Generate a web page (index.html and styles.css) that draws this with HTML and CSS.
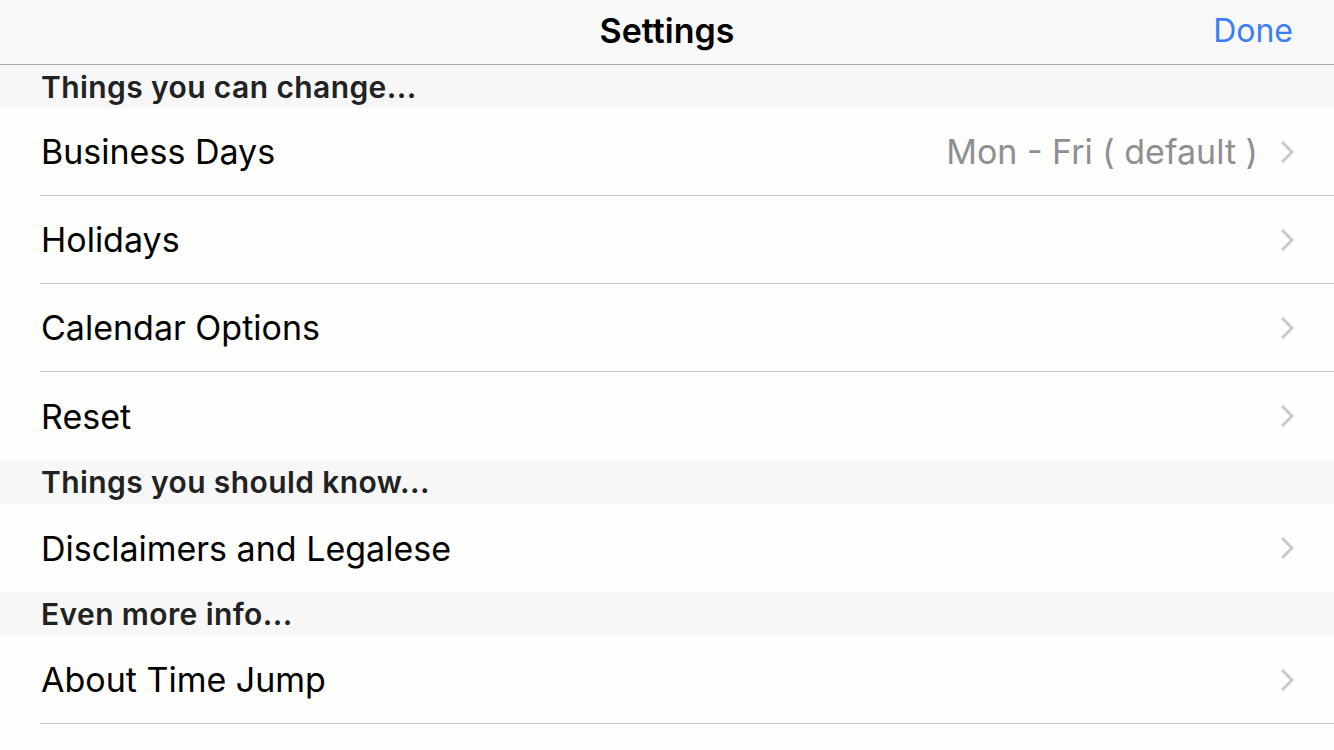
FILE: index.html
```html
<!DOCTYPE html>
<html lang="en">
<head>
  <meta charset="UTF-8">
  <meta name="viewport" content="width=device-width, initial-scale=1.0">
  <title>Settings</title>
  <link rel="stylesheet" href="styles.css">
</head>
<body>
  <div class="navbar">
    <div class="nav-title">Settings</div>
    <div class="nav-done">Done</div>
  </div>

  <div class="section-head first">Things you can change...</div>
  <div class="row sep">
    <span class="label">Business Days</span>
    <span class="detail">Mon - Fri ( default )</span>
    <svg class="chev" width="14" height="24" viewBox="0 0 14 24"><path d="M2 2 L12 12 L2 22" fill="none" stroke="#c7c7cc" stroke-width="3"/></svg>
  </div>
  <div class="row sep">
    <span class="label">Holidays</span>
    <svg class="chev" width="14" height="24" viewBox="0 0 14 24"><path d="M2 2 L12 12 L2 22" fill="none" stroke="#c7c7cc" stroke-width="3"/></svg>
  </div>
  <div class="row sep">
    <span class="label">Calendar Options</span>
    <svg class="chev" width="14" height="24" viewBox="0 0 14 24"><path d="M2 2 L12 12 L2 22" fill="none" stroke="#c7c7cc" stroke-width="3"/></svg>
  </div>
  <div class="row">
    <span class="label">Reset</span>
    <svg class="chev" width="14" height="24" viewBox="0 0 14 24"><path d="M2 2 L12 12 L2 22" fill="none" stroke="#c7c7cc" stroke-width="3"/></svg>
  </div>

  <div class="section-head">Things you should know...</div>
  <div class="row">
    <span class="label">Disclaimers and Legalese</span>
    <svg class="chev" width="14" height="24" viewBox="0 0 14 24"><path d="M2 2 L12 12 L2 22" fill="none" stroke="#c7c7cc" stroke-width="3"/></svg>
  </div>

  <div class="section-head">Even more info...</div>
  <div class="row sep">
    <span class="label">About Time Jump</span>
    <svg class="chev" width="14" height="24" viewBox="0 0 14 24"><path d="M2 2 L12 12 L2 22" fill="none" stroke="#c7c7cc" stroke-width="3"/></svg>
  </div>
</body>
</html>
```

FILE: styles.css
```css
body {
  margin: 0;
  font-family: Inter, "Noto Sans", sans-serif;
  background: #fefefd;
  color: #000;
}
.navbar {
  height: 64px;
  background: #f7f8f7;
  border-bottom: 1px solid #a9a9a9;
  display: flex;
  align-items: center;
  justify-content: center;
  position: relative;
}
.nav-title {
  font-size: 34px;
  font-weight: 600;
  margin-top: -4px;
}
.nav-done {
  position: absolute;
  right: 41px;
  top: 11px;
  font-size: 32px;
  color: #3b7df5;
}
.section-head {
  height: 44px;
  background: #f6f7f6;
  padding-left: 41px;
  font-size: 30px;
  font-weight: 600;
  letter-spacing: 0.4px;
  color: #222;
  display: flex;
  align-items: center;
}
.section-head.first {
  height: 43px;
}
.row {
  height: 88px;
  margin-left: 40px;
  padding-right: 40px;
  box-sizing: border-box;
  display: flex;
  align-items: center;
}
.row.sep {
  border-bottom: 1px solid #c8c7cc;
}
.label {
  flex: 1;
  font-size: 34px;
  padding-left: 1px;
}
.detail {
  font-size: 34px;
  color: #8e8e93;
  margin-right: 22px;
}
.chev {
  display: block;
}
```
